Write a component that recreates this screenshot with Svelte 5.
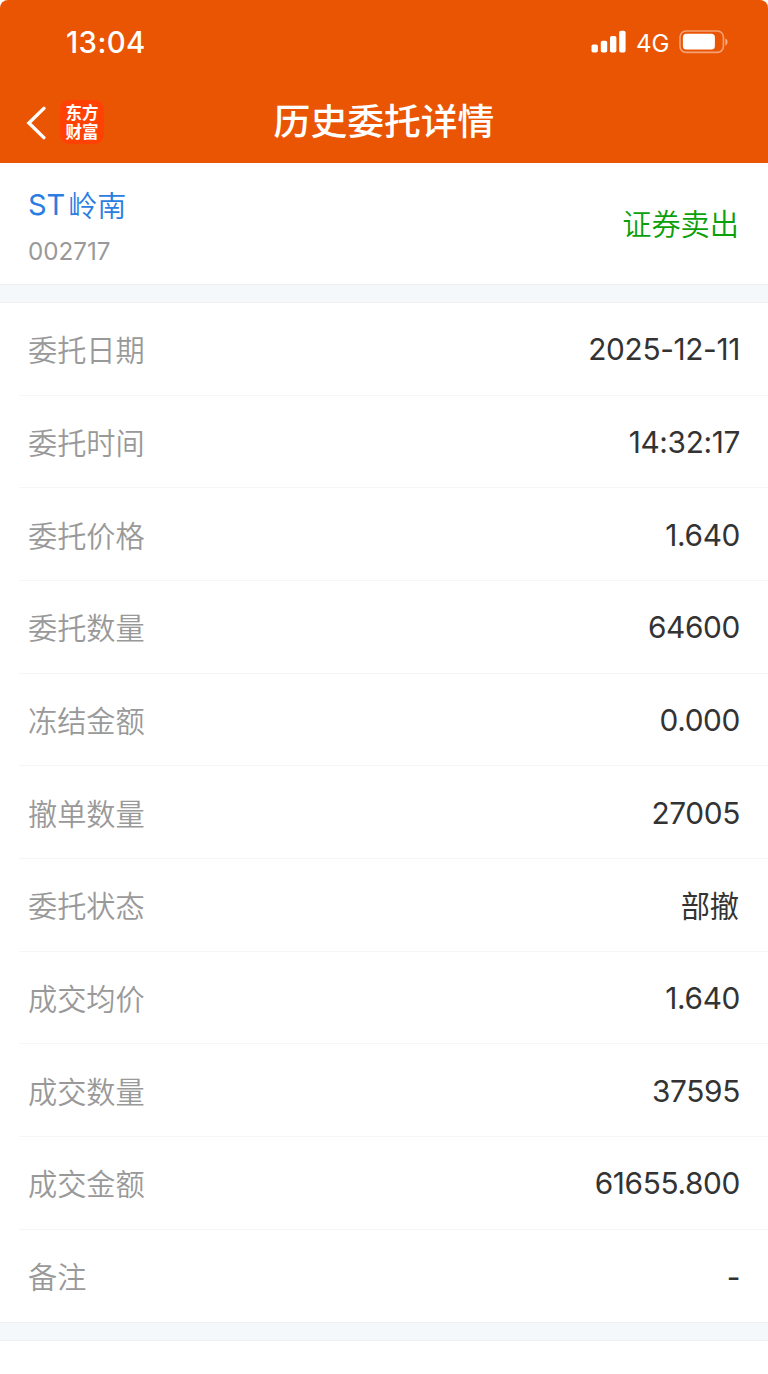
<script>
  const rows = [
    ['委托日期', '2025-12-11'],
    ['委托时间', '14:32:17'],
    ['委托价格', '1.640'],
    ['委托数量', '64600'],
    ['冻结金额', '0.000'],
    ['撤单数量', '27005'],
    ['委托状态', '部撤'],
    ['成交均价', '1.640'],
    ['成交数量', '37595'],
    ['成交金额', '61655.800'],
    ['备注', '-'],
  ];
</script>

<div class="screen">
  <header>
    <div class="status">
      <span class="time">13:04</span>
      <div class="indicators">
        <svg class="signal" width="36" height="24" viewBox="0 0 36 24" fill="#fff">
          <rect x="0.5" y="14.5" width="6.4" height="8" rx="1.8" />
          <rect x="9.8" y="10.8" width="6.4" height="11.7" rx="1.8" />
          <rect x="19" y="6" width="6.4" height="16.5" rx="1.8" />
          <rect x="28.2" y="0.8" width="6.4" height="21.7" rx="1.8" />
        </svg>
        <span class="network">4G</span>
        <svg class="battery" width="50" height="24" viewBox="0 0 50 24">
          <rect x="1" y="1" width="43.4" height="21.4" rx="6" fill="none" stroke="#fff" stroke-opacity=".45" stroke-width="1.6" />
          <rect x="3.9" y="3.8" width="32" height="15.8" rx="3.6" fill="#fff" />
          <path d="M46.3 8.2c3 1.4 3 6 0 7.4z" fill="#fff" fill-opacity=".5" />
        </svg>
      </div>
    </div>
    <div class="nav">
      <div class="left">
        <svg width="20" height="34" viewBox="0 0 20 34" fill="none" stroke="#fff" stroke-width="3.4" stroke-linecap="round" stroke-linejoin="miter">
          <path d="M17.9 2.4 2.9 17 17.9 31.6" />
        </svg>
        <div class="logo"><span>东方</span><span>财富</span></div>
      </div>
      <h1>历史委托详情</h1>
    </div>
  </header>

  <section class="stock">
    <div>
      <div class="name"><span class="st">ST</span><span class="han">岭南</span></div>
      <div class="code">002717</div>
    </div>
    <div class="side">证券卖出</div>
  </section>
  <div class="band"></div>
  <section class="list">
    {#each rows as [label, value]}
      <div class="row">
        <span class="label">{label}</span>
        <span class="value" class:text={value === '部撤'} class:dash={value === '-'}>{value}</span>
      </div>
    {/each}
  </section>
  <div class="band"></div>
</div>

<style>
  :global(body) { background: #fff; }
  .screen {
    width: 768px;
    height: 1374px;
    overflow: hidden;
    background: #fff;
    font-family: Inter, "Noto Sans CJK SC", sans-serif;
  }
  header {
    height: 163.4px;
    background: #ea5504;
    color: #fff;
    border-radius: 8px 8px 0 0;
  }
  .status {
    height: 82px;
    padding: 0 39px 0 66px;
    box-sizing: border-box;
    display: flex;
    align-items: center;
    justify-content: space-between;
  }
  .time { font-size: 29.4px; font-weight: 550; letter-spacing: .4px; line-height: 36px; padding-top: 4px; }
  .indicators { display: flex; align-items: center; height: 24px; padding-top: 2px; }
  .network { font-size: 24px; margin-left: 9px; width: 43px; line-height: 24px; padding-top: 3px; }
  svg { display: block; }
  .nav {
    height: 81px;
    display: grid;
    grid-template-columns: 150px 1fr 150px;
    align-items: center;
  }
  .left { display: flex; align-items: center; padding-left: 26px; }
  .logo {
    width: 44px;
    height: 44px;
    margin: -2px 0 0 14px;
    border-radius: 9px;
    background: #ff4203;
    display: flex;
    flex-direction: column;
    align-items: center;
    justify-content: center;
    font-family: "Noto Sans CJK SC", sans-serif;
    font-size: 16.5px;
    font-weight: 700;
    line-height: 18.5px;
  }
  h1 {
    margin: 0;
    padding-bottom: 7px;
    text-align: center;
    font: 500 36.8px/50px "Noto Sans CJK SC", sans-serif;
    white-space: nowrap;
  }
  .stock {
    height: 120.6px;
    box-sizing: border-box;
    padding: 22px 29px 0 28px;
    display: flex;
    justify-content: space-between;
  }
  .name { display: flex; font-size: 29px; line-height: 40px; color: #2b7de1; }
  .st { margin-right: 3px; }
  .han { font-family: "Noto Sans CJK SC", sans-serif; font-weight: 350; line-height: 38px; }
  .code { font-size: 24.2px; line-height: 32px; margin-top: 11px; color: #999; }
  .side { font-family: "Noto Sans CJK SC", sans-serif; font-size: 29.2px; line-height: 40px; padding-top: 17px; color: #0aa00a; font-weight: 350; }
  .band {
    height: 19px;
    box-sizing: border-box;
    background: #f4f8fa;
    border-top: 1px solid #eef0f1;
    border-bottom: 1px solid #eef0f1;
  }
  .row {
    height: 92.67px;
    box-sizing: border-box;
    margin-left: 19px;
    padding: 0 28px 0 9px;
    display: flex;
    align-items: center;
    justify-content: space-between;
    border-bottom: 1.5px solid #f6f6f6;
    font-size: 29.2px;
    line-height: 40px;
  }
  .row:last-child { border-bottom-color: transparent; }
  .label { color: #999; font-family: "Noto Sans CJK SC", sans-serif; font-weight: 350; padding-bottom: 1px; }
  .value { color: #333; font-size: 29.8px; letter-spacing: -.35px; padding-top: 1px; }
  .text { font-family: "Noto Sans CJK SC", sans-serif; font-size: 29.2px; letter-spacing: 0; padding: 0 1px 1px 0; }
  .dash { padding-top: 3px; }
</style>
